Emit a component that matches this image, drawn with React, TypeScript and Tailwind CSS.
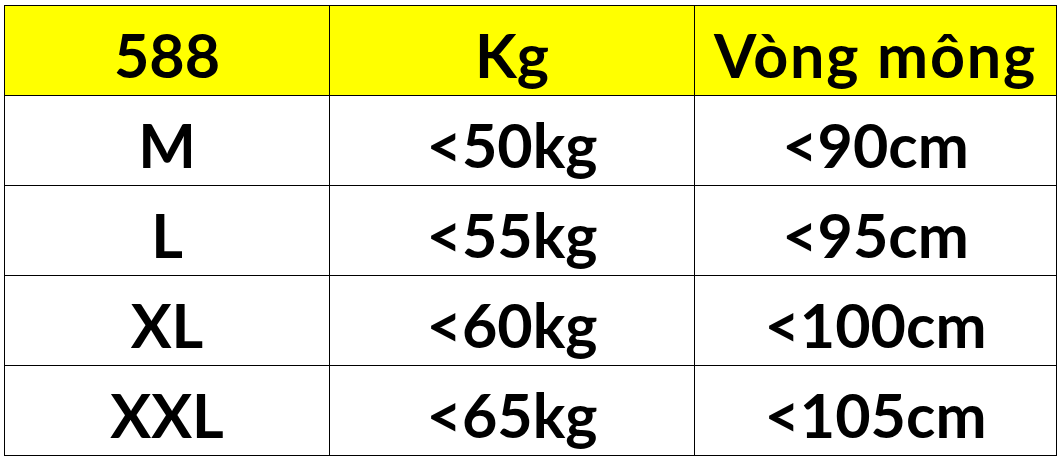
const header = ["588", "Kg", "Vòng mông"];

const rows = [
  ["M", "<50kg", "<90cm"],
  ["L", "<55kg", "<95cm"],
  ["XL", "<60kg", "<100cm"],
  ["XXL", "<65kg", "<105cm"],
];

function Cell({ children, head, wide }: { children: string; head?: boolean; wide?: boolean }) {
  return (
    <div
      className={`flex items-center justify-center pt-[7px] text-[61px] font-bold leading-none text-black ${
        head ? "bg-[#ffff00]" : "bg-white"
      } ${wide ? "tracking-[0.03em]" : ""}`}
    >
      {children}
    </div>
  );
}

export default function App() {
  return (
    <div className="h-[462px] w-[1063px] bg-white pl-[4px] pt-[5px] font-['Lato','Open_Sans',sans-serif]">
      <div className="grid w-fit grid-cols-[324px_364px_361px] grid-rows-[repeat(5,89px)] gap-px bg-black p-px">
        {header.map((h, i) => (
          <Cell key={h} head wide={i === 2}>
            {h}
          </Cell>
        ))}
        {rows.map((r) => r.map((c, i) => <Cell key={c + i}>{c}</Cell>))}
      </div>
    </div>
  );
}
